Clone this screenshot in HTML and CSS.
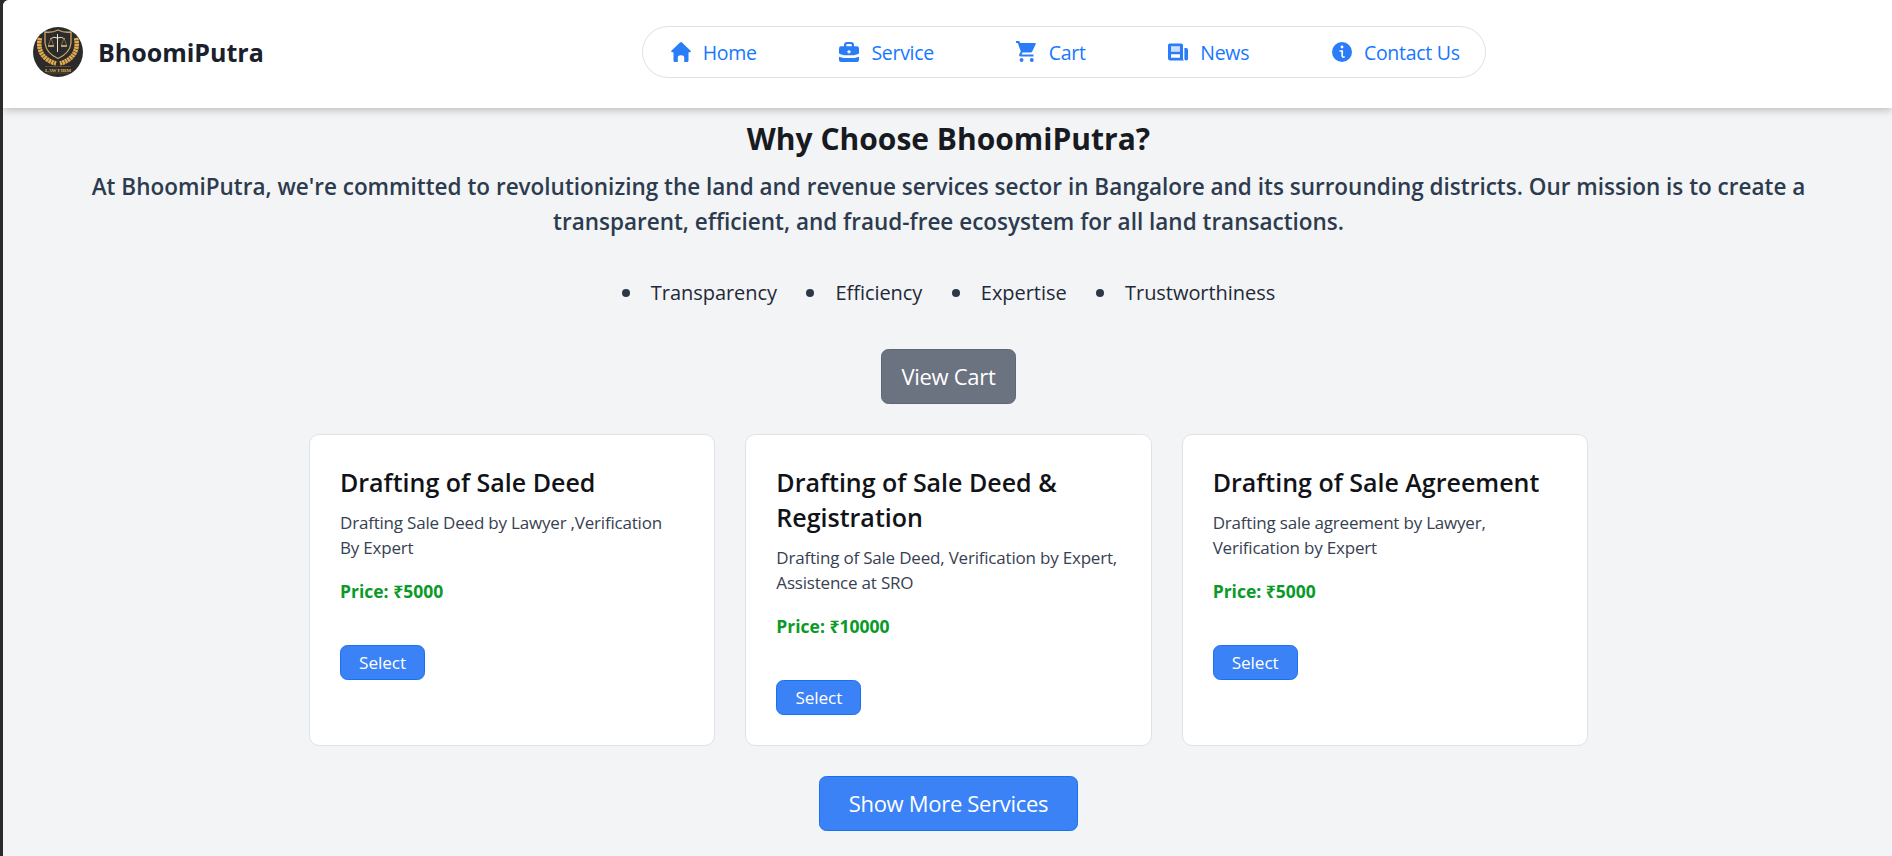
FILE: index.html
```html
<!DOCTYPE html>
<html lang="en">
<head>
<meta charset="utf-8">
<title>BhoomiPutra</title>
<link rel="stylesheet" href="styles.css">
</head>
<body>
<div class="page">
  <header class="header">
    <div class="brand">
      <svg class="logo" viewBox="0 0 50 50">
        <circle cx="25" cy="25" r="25" fill="#2b2b2c"/>
        <g fill="none" stroke="#e0a94e">
          <path d="M7 11C4 23 10 33 23 36.500M43 11C46 23 40 33 27 36.500" stroke-width="4.600" stroke-dasharray="2.400 .5"/>
          <path d="M12 5Q19 6 25 3Q31 6 38 5V16Q37 26 25 31.500Q13 26 12 16Z" fill="#2b2b2c" stroke="#c9a567" stroke-width="1.300"/>
          <path d="M24.500 7V25M17 12Q21 9 24.500 11Q28 9 32 12" stroke="#f2e3c4" stroke-width="1"/>
          <path d="M18 11L15.500 18M18 11L20.500 18M31 11L28.500 18M31 11L33.500 18" stroke="#a78650" stroke-width=".7"/>
          <path d="M15 19H21M28 19H34" stroke="#e9c88c" stroke-width="1.500"/>
          <path d="M12 39.500H38M14 46H36" stroke="#74572c" stroke-width=".7"/>
        </g>
        <text class="logo-text" x="25" y="45" text-anchor="middle" textLength="26" lengthAdjust="spacingAndGlyphs">LAW FIRM</text>
      </svg>
      <span class="brand-name">BhoomiPutra</span>
    </div>
    <nav class="nav">
      <a class="nav-item"><svg class="icon" viewBox="0 0 20 20"><path d="M9 .6Q10-.4 11 .6L19.600 8.800Q20.200 10 19 10.300H17.500V18.500Q17.500 20 16 20H13.200V15.500Q13.200 13.300 10 13.300T6.800 15.500V20H4Q2.500 20 2.500 18.500V10.300H1Q-.2 10 .4 8.800Z"/></svg>Home</a>
      <a class="nav-item"><svg class="icon" viewBox="0 0 20 20"><path fill-rule="evenodd" d="M5 4.300V3Q5 0 8 0H12Q15 0 15 3V4.300H18Q20 4.300 20 6.500V11Q20 12 18.500 12.300L15 13.200H5L1.500 12.300Q0 12 0 11V6.500Q0 4.300 2 4.300ZM7.200 4.300H12.800V3.300Q12.800 2 11.500 2H8.500Q7.200 2 7.200 3.300ZM9.400 8V9.100H8.300V10.400H9.400V11.500H10.600V10.400H11.700V9.100H10.600V8Z"/><path d="M0 14.800L4.500 16H15.500L20 14.800V18Q20 20 18 20H2Q0 20 0 18Z"/></svg>Service</a>
      <a class="nav-item"><svg class="icon cart" viewBox="0 0 20 21"><path d="M0 0H3.200L4.200 2H18.800Q20.200 2 19.700 3.300L16.200 10.500Q15.700 11.500 14.500 11.500H6.600L5.500 13.500H17.500V15.500H4.600Q2.800 15.300 3.200 13.600L4.800 10.600L1.800 2H0Z"/><circle cx="5.600" cy="19" r="1.900"/><circle cx="15.800" cy="19" r="1.900"/></svg>Cart</a>
      <a class="nav-item"><svg class="icon" viewBox="0 0 20 20"><path fill-rule="evenodd" d="M1.800 1.500H13.200Q15 1.500 15 3.300V16.700Q15 18 16.200 18.500H2.200Q0 18.500 0 16.300V3.300Q0 1.500 1.800 1.500ZM3 4.300V9.800H12V4.300ZM3 12.200V15.800H12V12.200Z"/><path d="M3 4.300H12V9.800H3Z" opacity=".25"/><path d="M16.400 6H18.200Q20 6 20 7.800V16.700Q20 18.500 18.200 18.500T16.400 16.700Z"/></svg>News</a>
      <a class="nav-item"><svg class="icon" viewBox="0 0 20 20"><circle cx="10" cy="10" r="10"/><circle cx="10" cy="5" r="1.400" fill="#fff"/><path d="M7.500 9H10.200V14.800M10 15H12.800" fill="none" stroke="#fff" stroke-width="1.700"/></svg>Contact Us</a>
    </nav>
  </header>
  <main class="main">
    <h2 class="title">Why Choose BhoomiPutra?</h2>
    <p class="intro">At BhoomiPutra, we're committed to revolutionizing the land and revenue services sector in Bangalore and its surrounding districts. Our mission is to create a<br>transparent, efficient, and fraud-free ecosystem for all land transactions.</p>
    <ul class="values">
      <li class="value">Transparency</li>
      <li class="value">Efficiency</li>
      <li class="value">Expertise</li>
      <li class="value">Trustworthiness</li>
    </ul>
    <button class="btn btn-cart">View Cart</button>
    <div class="cards">
      <article class="card">
        <h3 class="card-title">Drafting of Sale Deed</h3>
        <p class="card-text">Drafting Sale Deed by Lawyer ,Verification<br>By Expert</p>
        <p class="price">Price: ₹5000</p>
        <button class="btn btn-select">Select</button>
      </article>
      <article class="card">
        <h3 class="card-title">Drafting of Sale Deed &amp;<br>Registration</h3>
        <p class="card-text">Drafting of Sale Deed, Verification by Expert,<br>Assistence at SRO</p>
        <p class="price">Price: ₹10000</p>
        <button class="btn btn-select">Select</button>
      </article>
      <article class="card">
        <h3 class="card-title">Drafting of Sale Agreement</h3>
        <p class="card-text">Drafting sale agreement by Lawyer,<br>Verification by Expert</p>
        <p class="price">Price: ₹5000</p>
        <button class="btn btn-select">Select</button>
      </article>
    </div>
    <button class="btn btn-more">Show More Services</button>
  </main>
</div>
</body>
</html>
```
FILE: styles.css
```css
* { box-sizing: border-box; }
html, body { height: 100%; }
body {
  margin: 0;
  padding-left: 3px;
  background: #2b2b2e;
  font-family: "Open Sans", "Noto Sans", sans-serif;
  overflow: hidden;
}
h2, h3, p, ul { margin: 0; padding: 0; }
.page {
  height: 856px;
  background: #f3f4f6;
  border-top-left-radius: 6px;
  overflow: hidden;
}
.header {
  display: flex;
  align-items: flex-start;
  height: 108px;
  padding: 26px 0 0 30px;
  background: #fff;
  box-shadow: 0 2px 8px rgba(0, 0, 0, .24);
}
.brand {
  display: flex;
  align-items: center;
  width: 609px;
  height: 52px;
  gap: 15px;
}
.logo { width: 50px; height: 50px; }
.logo-text { font: 700 5px "Liberation Serif", serif; fill: #e5b25c; }
.brand-name { font-size: 25px; font-weight: 700; color: #1a202c; }
.nav {
  display: flex;
  align-items: center;
  gap: 82.500px;
  width: 844px;
  height: 52px;
  padding-left: 27.500px;
  border: 1px solid #dfe1e6;
  border-radius: 26px;
  color: #1677ff;
  font-size: 19.500px;
  letter-spacing: -.28px;
  white-space: nowrap;
}
.nav-item { display: flex; align-items: center; gap: 12.200px; }
.icon { width: 20px; height: 20px; fill: #2b7cf8; }
.cart { height: 21px; margin-top: -2px; }
.main {
  display: flex;
  flex-direction: column;
  align-items: center;
  padding-top: 11px;
  padding-left: 2px;
}
.title { font-size: 30px; line-height: 40px; font-weight: 700; color: #171b21; }
.intro {
  margin-top: 9.500px;
  font-size: 22.500px;
  line-height: 35px;
  font-weight: 600;
  color: #2d3b4e;
  text-align: center;
  white-space: nowrap;
}
.values {
  display: flex;
  gap: 29.500px;
  margin-top: 39.500px;
  list-style: none;
  font-size: 20px;
  line-height: 30px;
  letter-spacing: -.05px;
  color: #1f2937;
}
.value { display: flex; align-items: center; gap: 21px; }
.value::before { content: ""; width: 8px; height: 8px; border-radius: 50%; background: #2d3748; }
.btn {
  padding: 0;
  border: 1px solid #1a70f5;
  border-radius: 7.500px;
  background: #3b82f6;
  color: #fff;
  font-family: inherit;
}
.btn-cart {
  width: 135px;
  height: 55px;
  margin-top: 41px;
  padding-bottom: 1px;
  border-color: #5f6777;
  background: #6b7280;
  font-size: 22px;
  letter-spacing: -.3px;
}
.cards {
  display: grid;
  grid-template-columns: repeat(3, 1fr);
  gap: 30px;
  width: 1279px;
  height: 312px;
  margin-top: 30px;
}
.card {
  padding: 30px;
  border: 1px solid #dfe2e7;
  border-radius: 10px;
  background: #fff;
  white-space: nowrap;
}
.card-title { font-size: 25px; line-height: 35px; font-weight: 600; color: #111318; }
.card-text {
  margin-top: 10px;
  font-size: 17px;
  line-height: 25px;
  letter-spacing: -.2px;
  color: #364152;
}
.price { margin-top: 19px; font-size: 17.500px; line-height: 25px; font-weight: 700; color: #0a9a28; }
.btn-select {
  width: 85px;
  height: 35px;
  margin-top: 41px;
  font-size: 17.200px;
  letter-spacing: -.1px;
}
.btn-more {
  width: 259px;
  height: 55px;
  margin-top: 29.500px;
  padding-bottom: 1px;
  font-size: 22px;
  letter-spacing: -.3px;
}
```
